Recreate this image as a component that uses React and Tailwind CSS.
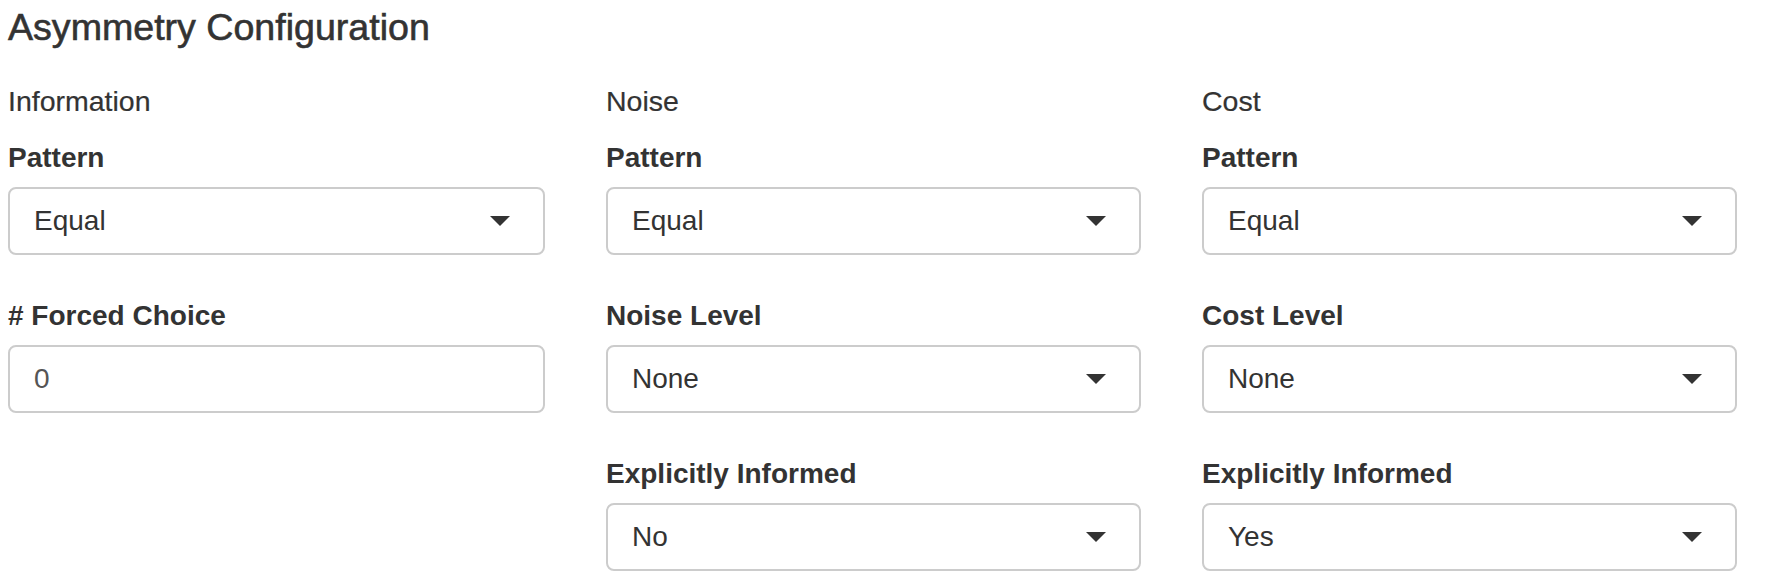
import React from "react";

function Caret() {
  return (
    <svg width="20" height="10" viewBox="0 0 20 10" className="shrink-0">
      <polygon points="0,0 20,0 10,10" fill="#333333" />
    </svg>
  );
}

function SelectBox({ value }) {
  return (
    <div className="flex h-[68px] items-center justify-between rounded-[8px] border-2 border-[#cccccc] bg-white pl-[24px] pr-[33px] text-[28px] text-[#333333]">
      <span>{value}</span>
      <Caret />
    </div>
  );
}

function InputBox({ value }) {
  return (
    <div className="flex h-[68px] items-center rounded-[8px] border-2 border-[#cccccc] bg-white px-[24px] text-[28px] text-[#555555]">
      <span>{value}</span>
    </div>
  );
}

function Group({ label, children }) {
  return (
    <div className="mb-[41px]">
      <div className="mb-[9px] text-[28px] font-bold leading-[40px] text-[#333333]">{label}</div>
      {children}
    </div>
  );
}

function Column({ title, children }) {
  return (
    <div className="flex flex-col">
      <div className="mb-[17px] text-[28.5px] leading-[40px] text-[#333333] [-webkit-text-stroke:0.2px_#333333]">{title}</div>
      {children}
    </div>
  );
}

export default function App() {
  return (
    <div
      className="w-[1768px] h-[588px] overflow-hidden bg-white pl-[8px] text-[#333333]"
      style={{ fontFamily: '"Liberation Sans", Arial, Helvetica, sans-serif' }}
    >
      <h3 className="mt-[7px] mb-[34px] text-[37.6px] font-medium leading-[40px] text-[#333333] [-webkit-text-stroke:0.6px_#333333]">
        Asymmetry Configuration
      </h3>
      <div className="grid grid-cols-[537px_535px_535px] gap-x-[61px]">
        <Column title="Information">
          <Group label="Pattern">
            <SelectBox value="Equal" />
          </Group>
          <Group label="# Forced Choice">
            <InputBox value="0" />
          </Group>
        </Column>
        <Column title="Noise">
          <Group label="Pattern">
            <SelectBox value="Equal" />
          </Group>
          <Group label="Noise Level">
            <SelectBox value="None" />
          </Group>
          <Group label="Explicitly Informed">
            <SelectBox value="No" />
          </Group>
        </Column>
        <Column title="Cost">
          <Group label="Pattern">
            <SelectBox value="Equal" />
          </Group>
          <Group label="Cost Level">
            <SelectBox value="None" />
          </Group>
          <Group label="Explicitly Informed">
            <SelectBox value="Yes" />
          </Group>
        </Column>
      </div>
    </div>
  );
}
